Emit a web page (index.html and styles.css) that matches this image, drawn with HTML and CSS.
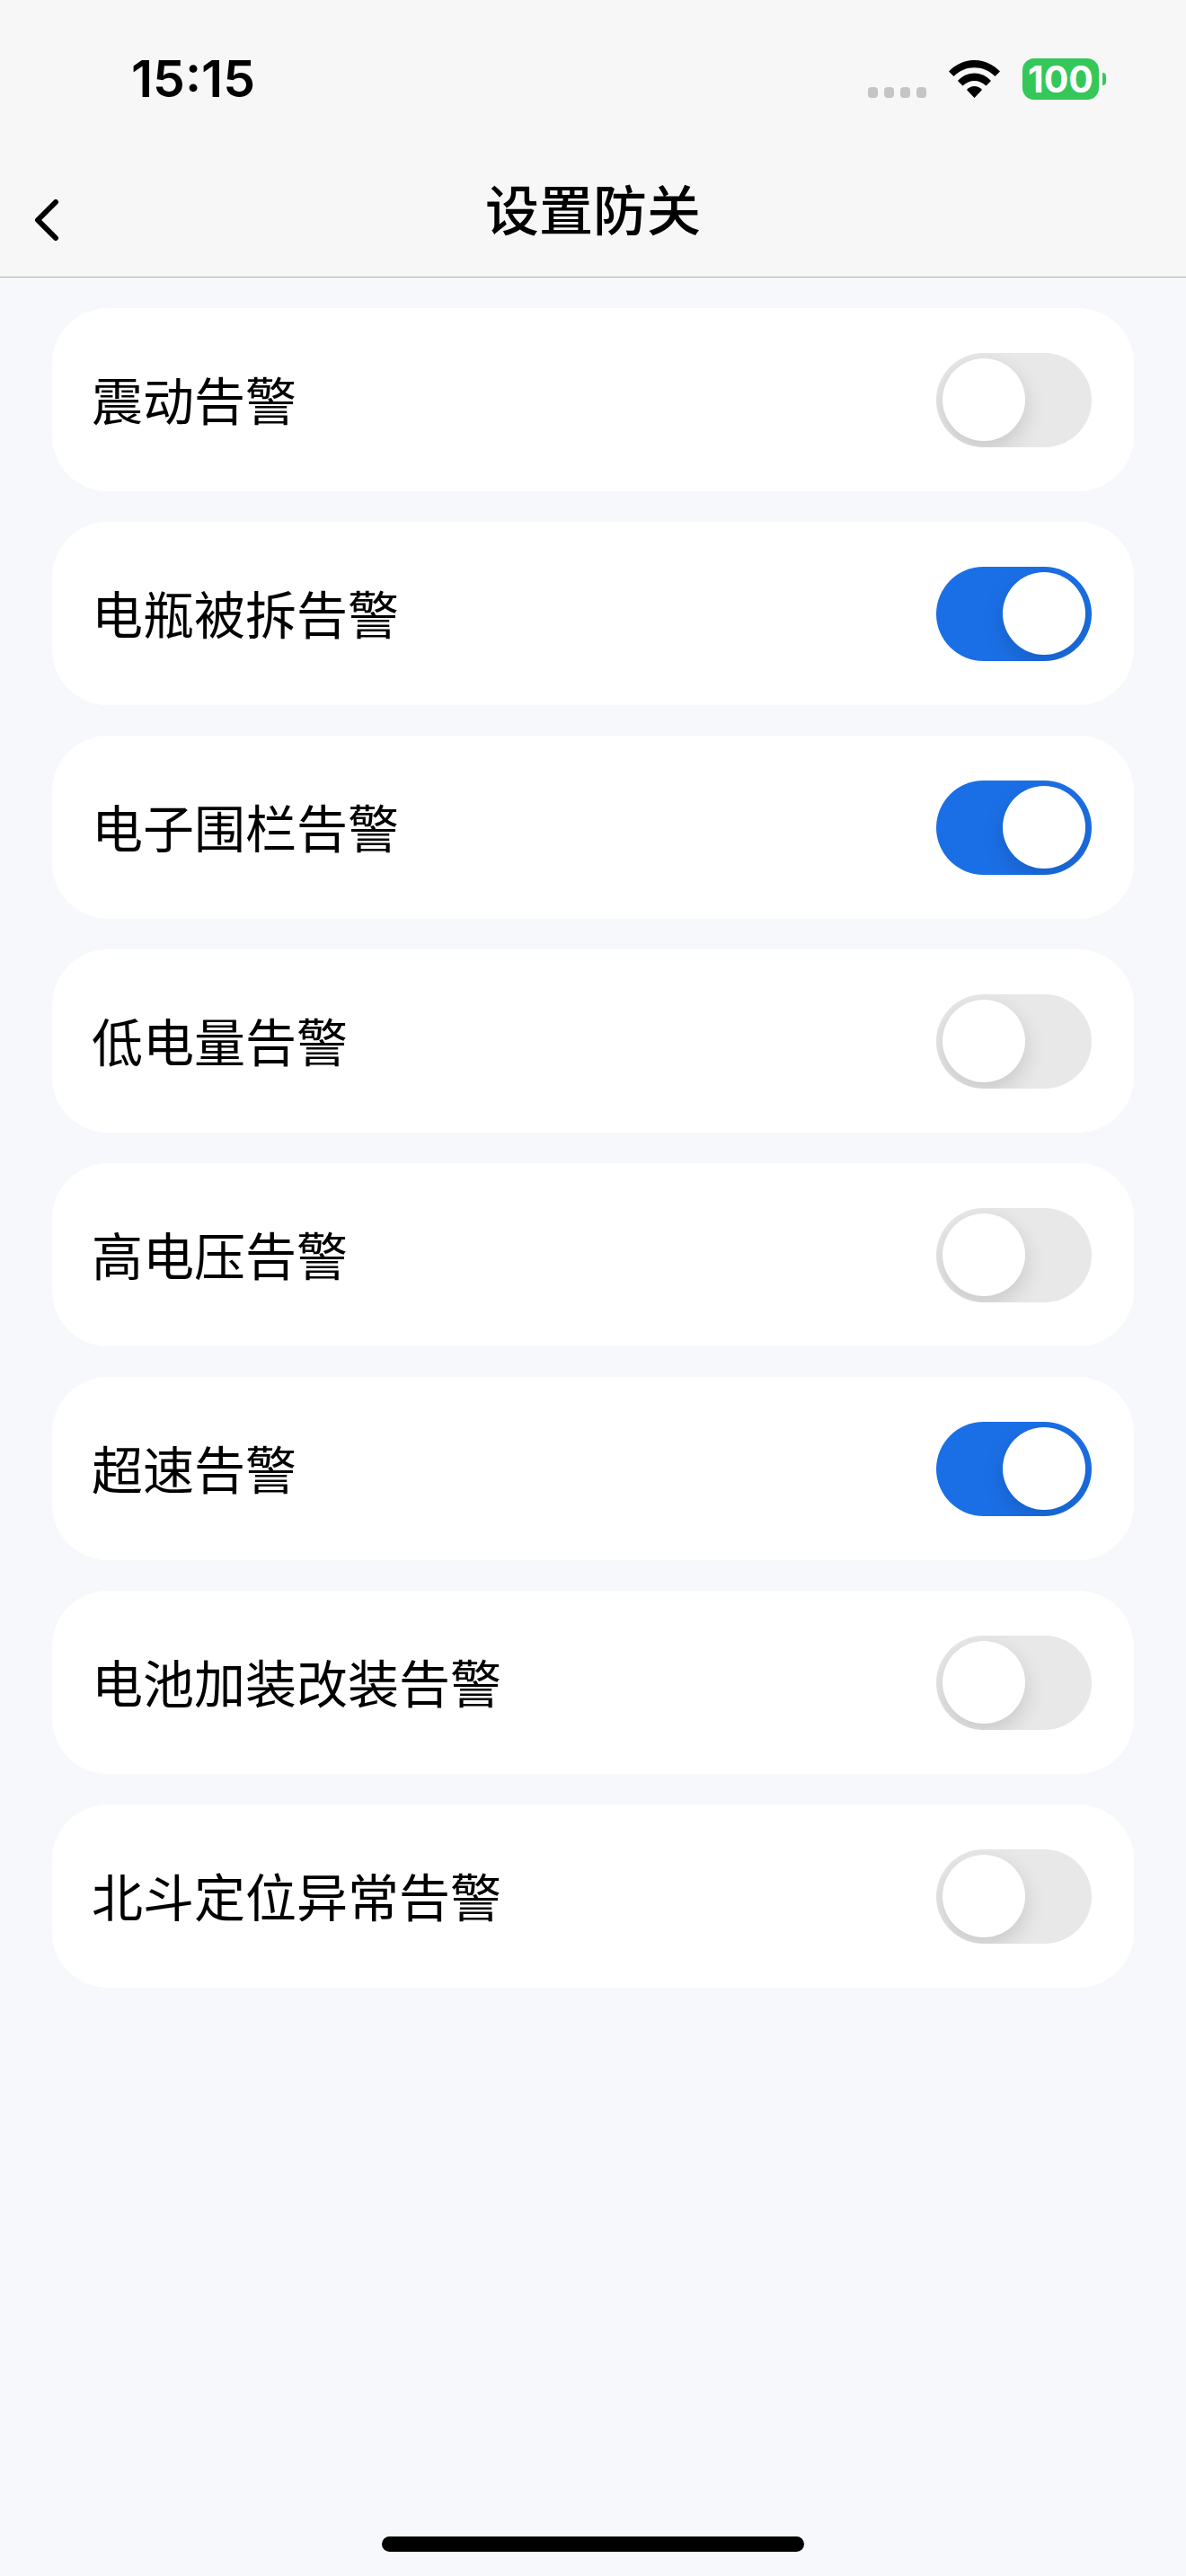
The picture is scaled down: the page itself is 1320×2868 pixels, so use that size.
FILE: index.html
```html
<!DOCTYPE html>
<html lang="zh-CN">
<head>
    <meta charset="UTF-8">
    <meta name="viewport" content="width=device-width, initial-scale=1.0">
    <title>设置防关</title>
    <link rel="stylesheet" href="styles.css">
</head>
<body>

<header class="header">
    <div class="status-bar">
        <div class="time">15:15</div>
        <div class="status-icons">
            <div class="signal"><i></i><i></i><i></i><i></i></div>
            <svg class="wifi" viewBox="0 0 57 42" aria-hidden="true">
                <path d="M0 12.500 C16 -4.200 41 -4.200 57 12.500 L51.500 18 C38.500 5 18.500 5 5.500 18 Z"/>
                <path d="M10 23 C20.500 11.700 36.500 11.700 47 23 L41.500 28.500 C34 21 23 21 15.500 28.500 Z"/>
                <path d="M20 33 Q23.500 29 28.500 29 Q33.500 29 37 33 L28.500 42 Z"/>
            </svg>
            <div class="battery">
                <span class="battery-level">100</span>
                <span class="battery-cap"></span>
            </div>
        </div>
    </div>
    <nav class="nav-bar">
        <button type="button" class="back" aria-label="返回">
            <svg viewBox="0 0 28 46" aria-hidden="true"><path d="M24 3 L4 23 L24 43"/></svg>
        </button>
        <h1 class="title">设置防关</h1>
    </nav>
</header>

<main class="list">
    <label class="card">
        <span>震动告警</span>
        <input type="checkbox" class="switch">
    </label>
    <label class="card">
        <span>电瓶被拆告警</span>
        <input type="checkbox" class="switch" checked>
    </label>
    <label class="card">
        <span>电子围栏告警</span>
        <input type="checkbox" class="switch" checked>
    </label>
    <label class="card">
        <span>低电量告警</span>
        <input type="checkbox" class="switch">
    </label>
    <label class="card">
        <span>高电压告警</span>
        <input type="checkbox" class="switch">
    </label>
    <label class="card">
        <span>超速告警</span>
        <input type="checkbox" class="switch" checked>
    </label>
    <label class="card">
        <span>电池加装改装告警</span>
        <input type="checkbox" class="switch">
    </label>
    <label class="card">
        <span>北斗定位异常告警</span>
        <input type="checkbox" class="switch">
    </label>
</main>

<div class="home-indicator"></div>

</body>
</html>
```
FILE: styles.css
```css
* {
    box-sizing: border-box;
}
body {
    margin: 0;
    min-height: 100vh;
    display: flex;
    flex-direction: column;
    background-color: #f6f8fc;
    color: #000;
    font-family: Inter, "Noto Sans CJK SC", sans-serif;
}
.header {
    background-color: #f7f7f7;
    border-bottom: 1px solid #acacac;
}

/* Status bar */
.status-bar {
    height: 176px;
    padding: 0 89px 0 146px;
    display: flex;
    align-items: center;
    justify-content: space-between;
}
.time {
    font-size: 57px;
    font-weight: 600;
    line-height: 64px;
}
.status-icons {
    display: flex;
    align-items: center;
}
.signal {
    display: flex;
    align-self: flex-end;
    gap: 7px;
    margin-right: 25px;
    padding-bottom: 2px;
}
.signal i {
    width: 11px;
    height: 12px;
    border-radius: 4px;
    background-color: #c5c5c5;
}
.wifi {
    width: 57px;
    height: 42px;
    margin-right: 25px;
}
.battery {
    display: flex;
    align-items: center;
    gap: 4px;
}
.battery-level {
    width: 85px;
    height: 46px;
    border-radius: 13px;
    background-color: #34c759;
    color: #fff;
    font-size: 41px;
    font-weight: 700;
    line-height: 46px;
    text-align: center;
}
.battery-cap {
    width: 4px;
    height: 14px;
    border-radius: 0 4px 4px 0;
    background-color: #34c759;
}

/* Navigation bar */
.nav-bar {
    height: 132px;
    padding: 14px 38px 0;
    display: grid;
    grid-template-columns: 60px 1fr 60px;
    align-items: start;
}
.back {
    height: 110px;
    padding: 0;
    border: none;
    background: none;
    display: flex;
    align-items: center;
    cursor: pointer;
}
.back svg {
    width: 28px;
    height: 46px;
    fill: none;
    stroke: #000;
    stroke-width: 6;
    stroke-linecap: round;
    stroke-linejoin: round;
}
.title {
    margin: 0;
    font-size: 60px;
    font-weight: 500;
    line-height: 90px;
    text-align: center;
}

/* Alarm switches */
.list {
    flex: 1;
    padding: 34px 58px;
    display: flex;
    flex-direction: column;
    gap: 34px;
}
.card {
    height: 204px;
    padding: 0 47px 0 44px;
    display: flex;
    align-items: center;
    justify-content: space-between;
    border-radius: 62px;
    background-color: #fff;
    font-size: 57px;
    line-height: 84px;
    cursor: pointer;
}
.card span {
    padding-top: 5px;
}
.switch {
    appearance: none;
    flex-shrink: 0;
    width: 173px;
    height: 105px;
    margin: 0;
    padding: 0 7px;
    display: flex;
    align-items: center;
    border-radius: 53px;
    background-color: #e8e8e8;
    overflow: hidden;
    cursor: pointer;
}
.switch::before {
    content: "";
    width: 92px;
    height: 92px;
    border-radius: 50%;
    background-color: #fff;
    box-shadow: 0 9px 24px rgba(0, 0, 0, 0.14);
}
.switch:checked {
    justify-content: flex-end;
    background-color: #1b6fe6;
}

.home-indicator {
    align-self: center;
    width: 470px;
    height: 17px;
    margin-bottom: 27px;
    border-radius: 9px;
    background-color: #000;
}
```
